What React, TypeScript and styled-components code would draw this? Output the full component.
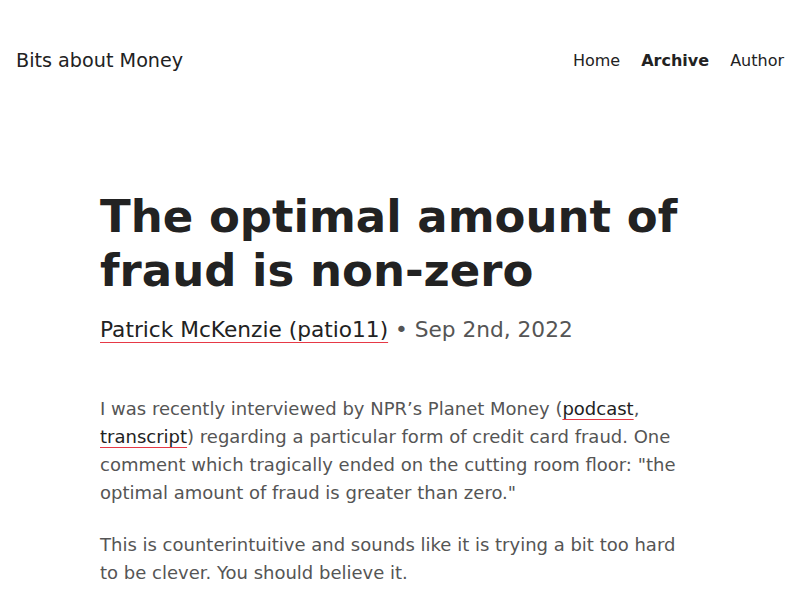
import React from "react";
import styled, { createGlobalStyle } from "styled-components";

const Global = createGlobalStyle`
  html, body { margin: 0; padding: 0; background: #fff; }
  body { font-family: "DejaVu Sans", sans-serif; color: #222; }
  * { box-sizing: border-box; }
`;

const Header = styled.header`
  display: flex;
  align-items: center;
  justify-content: space-between;
  height: 120px;
  padding: 0 16px;
`;

const Brand = styled.a`
  font-size: 19.2px;
  color: #222;
  text-decoration: none;
`;

const Nav = styled.nav`
  display: flex;
  gap: 21px;
`;

const NavLink = styled.a<{ $active?: boolean }>`
  font-size: 16px;
  color: #222;
  text-decoration: none;
  font-weight: ${(p) => (p.$active ? 700 : 400)};
`;

const Article = styled.main`
  max-width: 600px;
  margin: 0 auto;
  padding-top: 70px;
`;

const Title = styled.h1`
  margin: 0;
  font-size: 45px;
  line-height: 54px;
  font-weight: 700;
  color: #222;
`;

const Meta = styled.div`
  margin-top: 16px;
  font-size: 21.7px;
  line-height: 32px;
  color: #555;
`;

const Author = styled.a`
  color: #222;
  text-decoration: underline;
  text-decoration-color: #e63946;
  text-decoration-thickness: 1px;
  text-underline-offset: 5px;
`;

const Body = styled.div`
  margin-top: 49px;
  padding-right: 4px;
`;

const P = styled.p`
  margin: 0 0 24px;
  font-size: 18px;
  line-height: 28px;
  color: #555;
`;

const Link = styled.a`
  color: #222;
  text-decoration: underline;
  text-decoration-color: #e63946;
  text-decoration-thickness: 1px;
  text-underline-offset: 4px;
`;

export default function App() {
  return (
    <>
      <Global />
      <Header>
        <Brand href="#">Bits about Money</Brand>
        <Nav>
          <NavLink href="#">Home</NavLink>
          <NavLink href="#" $active>Archive</NavLink>
          <NavLink href="#">Author</NavLink>
        </Nav>
      </Header>
      <Article>
        <Title>The optimal amount of fraud is non-zero</Title>
        <Meta>
          <Author href="#">Patrick McKenzie (patio11)</Author> • Sep 2nd, 2022
        </Meta>
        <Body>
          <P>
            I was recently interviewed by NPR’s Planet Money (<Link href="#">podcast</Link>,{" "}
            <Link href="#">transcript</Link>) regarding a particular form of credit card fraud. One
            comment which tragically ended on the cutting room floor: "the optimal amount of fraud
            is greater than zero."
          </P>
          <P>
            This is counterintuitive and sounds like it is trying a bit too hard to be clever. You
            should believe it.
          </P>
        </Body>
      </Article>
    </>
  );
}
